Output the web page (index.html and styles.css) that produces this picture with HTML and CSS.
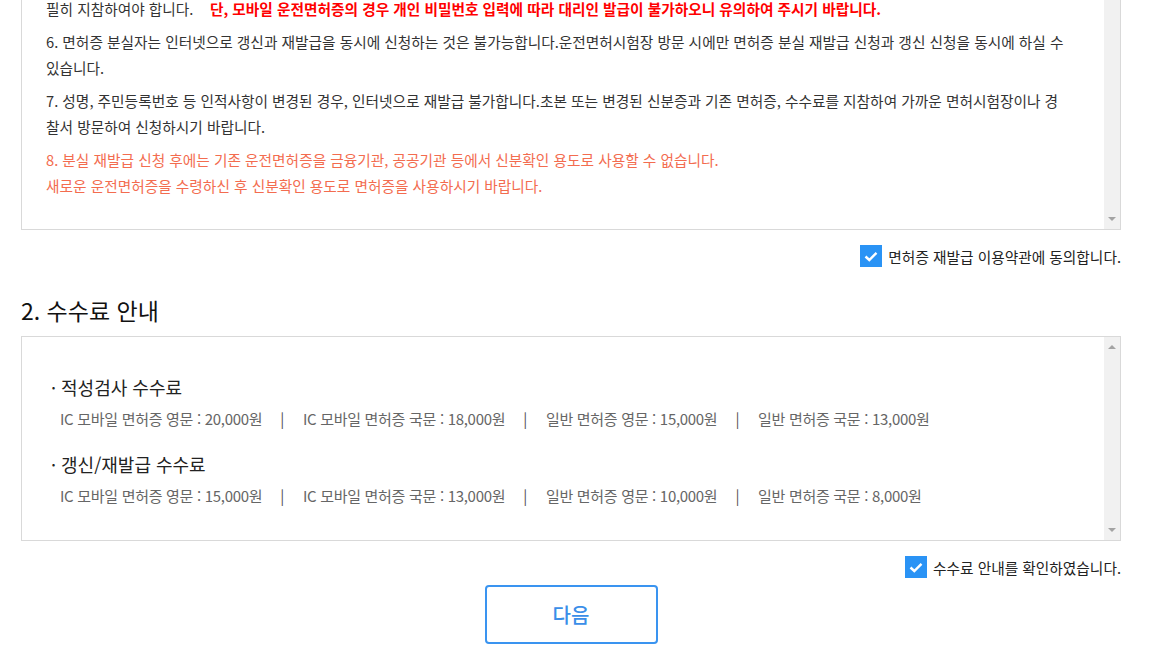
FILE: index.html
```html
<!DOCTYPE html>
<html lang="ko">
 <head>
   <title>면허증 재발급</title>
   <meta charset="utf-8">
   <link rel="stylesheet" href="styles.css">
 </head>
 <body>
  <div id="main">

    <div class="box terms">
      <div class="box-body">
        <p>필히 지참하여야 합니다.&nbsp;&nbsp;&nbsp; <b class="red">단, 모바일 운전면허증의 경우 개인 비밀번호 입력에 따라 대리인 발급이 불가하오니 유의하여 주시기 바랍니다.</b></p>
        <p>6. 면허증 분실자는 인터넷으로 갱신과 재발급을 동시에 신청하는 것은 불가능합니다.운전면허시험장 방문 시에만 면허증 분실 재발급 신청과 갱신 신청을 동시에 하실 수<br>있습니다.</p>
        <p>7. 성명, 주민등록번호 등 인적사항이 변경된 경우, 인터넷으로 재발급 불가합니다.초본 또는 변경된 신분증과 기존 면허증, 수수료를 지참하여 가까운 면허시험장이나 경<br>찰서 방문하여 신청하시기 바랍니다.</p>
        <p class="orange">8. 분실 재발급 신청 후에는 기존 운전면허증을 금융기관, 공공기관 등에서 신분확인 용도로 사용할 수 없습니다.<br>새로운 운전면허증을 수령하신 후 신분확인 용도로 면허증을 사용하시기 바랍니다.</p>
      </div>
      <div class="scrollbar">
        <span class="arrow down"></span>
      </div>
    </div>

    <label class="agree">
      <span class="check"><svg width="14" height="11" viewBox="0 0 14 11"><path d="M1.5 5.5 L5.3 9 L12.5 1.8" fill="none" stroke="#fff" stroke-width="2.4"/></svg></span>
      면허증 재발급 이용약관에 동의합니다.
    </label>

    <h2>2. 수수료 안내</h2>

    <div class="box fees">
      <div class="box-body">
        <h3>· 적성검사 수수료</h3>
        <div class="fee-row">
          <span>IC 모바일 면허증 영문 : 20,000원</span><i>|</i>
          <span>IC 모바일 면허증 국문 : 18,000원</span><i>|</i>
          <span>일반 면허증 영문 : 15,000원</span><i>|</i>
          <span>일반 면허증 국문 : 13,000원</span>
        </div>
        <h3>· 갱신/재발급 수수료</h3>
        <div class="fee-row">
          <span>IC 모바일 면허증 영문 : 15,000원</span><i>|</i>
          <span>IC 모바일 면허증 국문 : 13,000원</span><i>|</i>
          <span>일반 면허증 영문 : 10,000원</span><i>|</i>
          <span>일반 면허증 국문 : 8,000원</span>
        </div>
      </div>
      <div class="scrollbar">
        <span class="arrow up"></span>
        <span class="arrow down"></span>
      </div>
    </div>

    <label class="agree">
      <span class="check"><svg width="14" height="11" viewBox="0 0 14 11"><path d="M1.5 5.5 L5.3 9 L12.5 1.8" fill="none" stroke="#fff" stroke-width="2.4"/></svg></span>
      수수료 안내를 확인하였습니다.
    </label>

    <div class="actions">
      <button class="next">다음</button>
    </div>

  </div>
 </body>
</html>
```

FILE: styles.css
```css
html, body {
  margin: 0;
  padding: 0;
  background: #fff;
}
body {
  font-family: "Noto Sans CJK KR", "Noto Sans", sans-serif;
  color: #333;
  overflow: hidden;
}
#main {
  width: 1100px;
  margin: -5px 0 0 21px;
}

.box {
  display: flex;
  border: 1px solid #d9d9d9;
  box-sizing: border-box;
}
.box-body {
  flex: 1;
  min-width: 0;
}
.scrollbar {
  width: 16px;
  background: #f1f1f1;
  display: flex;
  flex-direction: column;
  justify-content: space-between;
  align-items: center;
  padding: 8px 0;
}
.terms .scrollbar {
  justify-content: flex-end;
}
.arrow {
  width: 0;
  height: 0;
  border-left: 4px solid transparent;
  border-right: 4px solid transparent;
}
.arrow.up {
  border-bottom: 4px solid #a3a3a3;
}
.arrow.down {
  border-top: 4px solid #a3a3a3;
}

.terms .box-body {
  padding: 0 0 23px 24px;
  font-size: 14.7px;
  line-height: 26px;
  white-space: nowrap;
}
.terms p {
  margin: 0 0 7px;
}
.red {
  color: #ff0000;
}
.orange {
  color: #f36c4f;
}

.agree {
  display: flex;
  justify-content: flex-end;
  align-items: center;
  gap: 6px;
  font-size: 14.7px;
  color: #222;
  margin-top: 15px;
  height: 22px;
}
.check {
  width: 22px;
  height: 22px;
  background: #2a93f5;
  display: flex;
  align-items: center;
  justify-content: center;
}

h2 {
  font-size: 23px;
  font-weight: 400;
  color: #111;
  margin: 28px 0 11px;
  line-height: 30px;
}

.fees .box-body {
  padding: 35px 0 32px 29px;
}
h3 {
  font-size: 18px;
  font-weight: 400;
  color: #222;
  margin: 0;
  line-height: 30px;
}
.fee-row {
  font-size: 15px;
  color: #666;
  line-height: 24px;
  margin: 5px 0 18px 9px;
  letter-spacing: -0.3px;
  white-space: nowrap;
}
.fee-row:last-child {
  margin-bottom: 0;
}
.fee-row i {
  font-style: normal;
  color: #555;
  margin: 0 15px 0 18px;
}

.actions {
  display: flex;
  justify-content: center;
  margin-top: 7px;
}
.next {
  width: 173px;
  height: 59px;
  border: 2px solid #3a94f0;
  border-radius: 4px;
  background: #fff;
  color: #3a8ee8;
  font-family: "Noto Sans CJK KR", sans-serif;
  font-size: 20px;
  font-weight: 500;
}
```
